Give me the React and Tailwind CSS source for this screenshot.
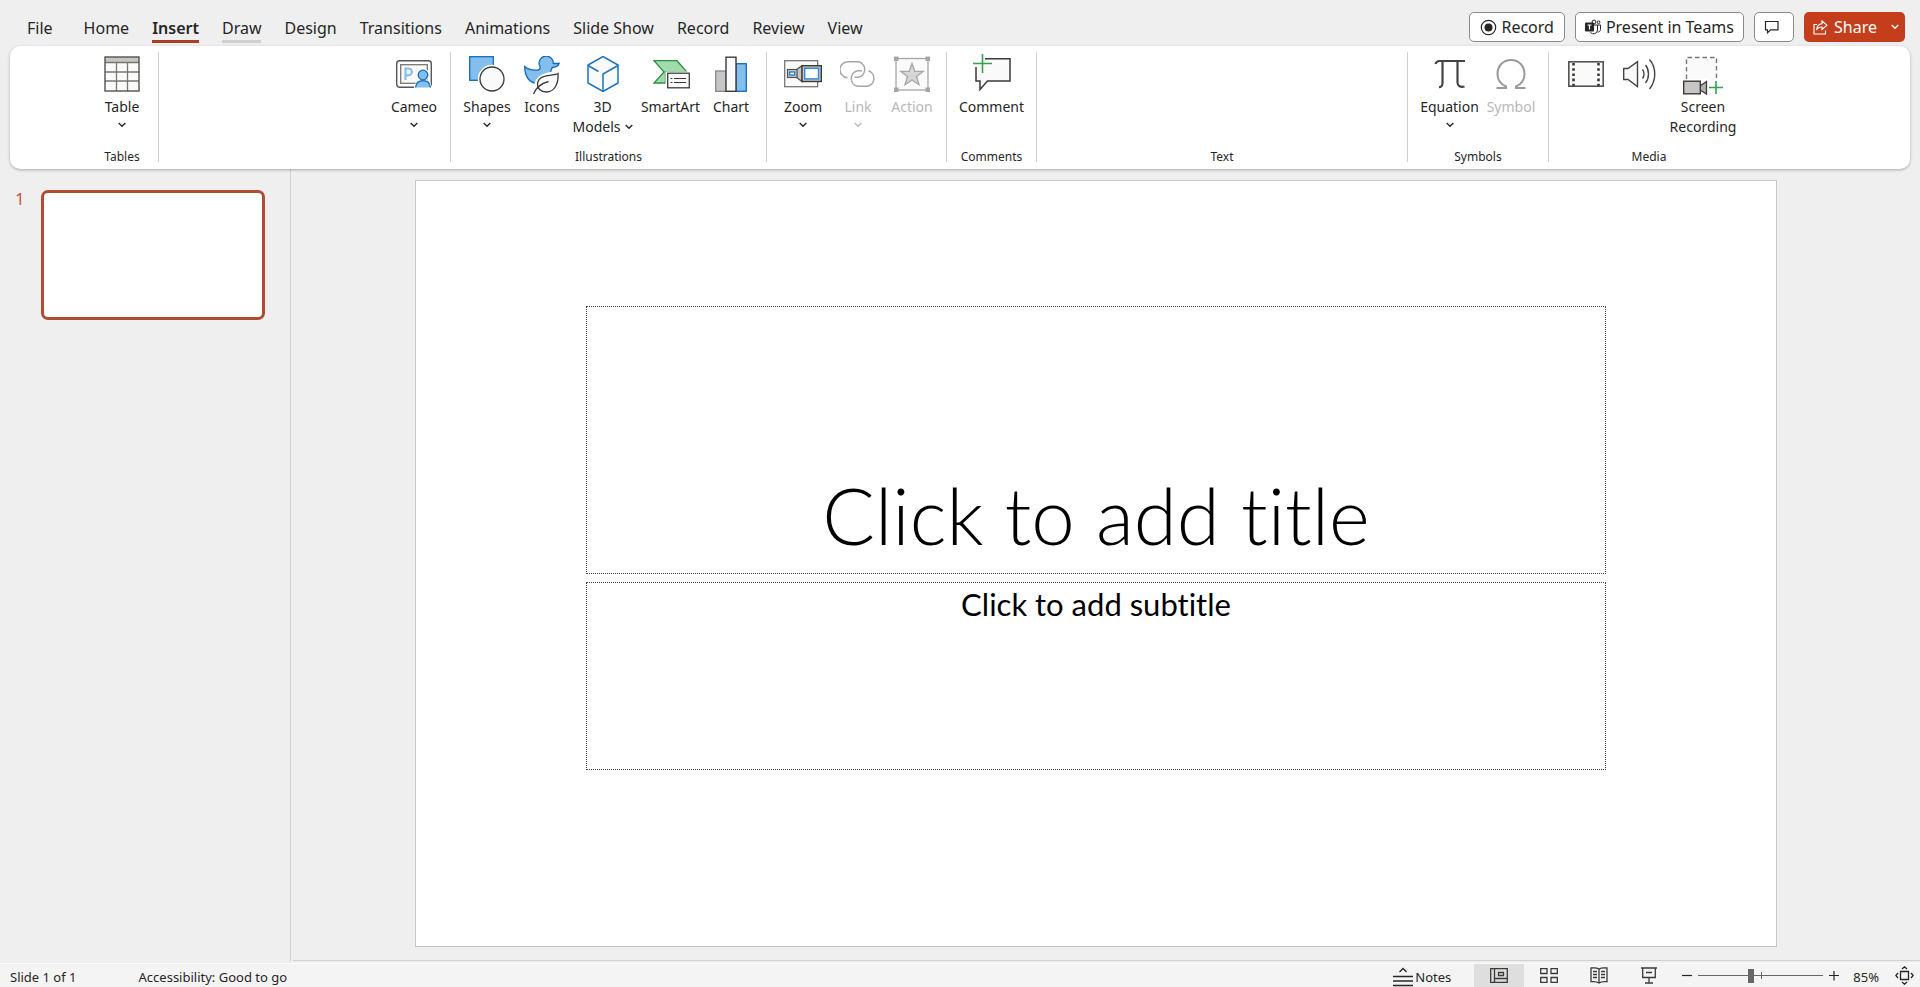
import React from "react";

const TableIcon = () => (
    <svg width="36" height="36" viewBox="0 0 36 36" fill="none">
        <rect x="1" y="1" width="34" height="34" fill="#fafafa" />
        <rect x="1" y="1" width="34" height="5" fill="#c8c6c4" />
        <path d="M1 6.500H35M12.500 6V35M23.500 6V35M1 16H35M1 25H35" stroke="#797774" strokeWidth="1.300" />
        <rect x="1" y="1" width="34" height="34" stroke="#55534f" strokeWidth="1.400" />
    </svg>
);

const CameoIcon = () => (
    <svg width="36" height="36" viewBox="0 0 36 36" fill="none">
        <rect x="0.700" y="4.700" width="34.600" height="26.600" rx="3" fill="#fff" stroke="#55555a" strokeWidth="1.400" />
        <rect x="4.700" y="8.700" width="26.600" height="18.600" fill="#fafafa" stroke="#797774" strokeWidth="1.300" />
        <path d="M9.500 24V12.500H12.500a3.300 3.300 0 0 1 0 6.800H9.500" stroke="#83beec" strokeWidth="2.200" />
        <path d="M18 33c0-5 3-8 5-9a6.500 6.500 0 1 1 8 0c2.500 1 5 4 5 9z" fill="#fff" />
        <circle cx="27" cy="19" r="4.800" fill="#83beec" stroke="#0f6cbd" strokeWidth="1.300" />
        <path d="M19.600 31.500c.4-4.500 3.400-6.900 7.400-6.900s7 2.400 7.400 6.900" fill="#83beec" stroke="#0f6cbd" strokeWidth="1.300" />
    </svg>
);

const ShapesIcon = () => (
    <svg width="36" height="36" viewBox="0 0 36 36" fill="none">
        <rect x="0.700" y="0.700" width="23.600" height="23.600" fill="#83beec" stroke="#0f6cbd" strokeWidth="1.300" />
        <circle cx="23" cy="23" r="14.200" fill="#fff" />
        <circle cx="23" cy="23" r="12" fill="#fafafa" stroke="#3b3a39" strokeWidth="1.300" />
    </svg>
);

const IconsIcon = () => (
    <svg width="36" height="38" viewBox="0 0 36 38" fill="none">
        <path d="M0.700 10.500c3.500 3.500 8.500 3.800 13 3.500 2-.2 2.800-1.500 2.200-3.500a7 7 0 0 1 12.600-6.700c.5 1 .7 2.200.7 3.500 2 .4 4 .2 6 0-1 2.700-3.700 4.200-7 4.200-.8 2.500-1.700 3.500-1.700 6 0 6.500-5.500 10-12.500 10C5.500 27.500.7 20.500.7 10.500z" fill="#83beec" stroke="#0f6cbd" strokeWidth="1.300" />
        <path d="M9.500 38c0-6 .5-12 3.500-15.500 4-5.500 12-6.500 23-7.500 1.500 13-3 24-14 23z" fill="#fff" />
        <path d="M34 17.500c.8 10-3.500 18.500-11.500 18.500-6 0-9.500-4-9-8.500.7-7.500 9.500-8 14.500-8.500 2.500-.3 4.500-.5 6-1.500z" fill="#fafafa" stroke="#3b3a39" strokeWidth="1.300" />
        <path d="M9.500 38c2-5 6-10 15-12.500" stroke="#3b3a39" strokeWidth="1.300" />
    </svg>
);

const CubeIcon = () => (
    <svg width="36" height="36" viewBox="0 0 36 36" fill="none">
        <path d="M18 0.500L33 9V27L18 35.500L3 27V9z" fill="#fafafa" stroke="#1e74bd" strokeWidth="1.500" />
        <path d="M3 9.500L13.500 15.500M33 9.500L18 18V35" stroke="#1e74bd" strokeWidth="1.500" />
    </svg>
);

const SmartArtIcon = () => (
    <svg width="38" height="36" viewBox="0 0 38 36" fill="none">
        <path d="M2 4.700H25L35 16H13.500V27H2L12 16z" fill="#a1dba9" stroke="#2f8f48" strokeWidth="1.300" />
        <rect x="13.500" y="15.500" width="24" height="17" fill="#fff" />
        <rect x="15.700" y="17.200" width="21.600" height="14.600" fill="#fafafa" stroke="#3b3a39" strokeWidth="1.300" />
        <path d="M18.500 22.500h2M22 22.500h12M18.500 26.500h2M22 26.500h12" stroke="#3b3a39" strokeWidth="1.200" />
    </svg>
);

const ChartIcon = () => (
    <svg width="34" height="36" viewBox="0 0 34 36" fill="none">
        <rect x="1.700" y="15" width="10.600" height="20.300" fill="#c8c6c4" stroke="#8a8886" strokeWidth="1.300" />
        <rect x="22" y="7.700" width="10.300" height="27.600" fill="#83beec" stroke="#0f6cbd" strokeWidth="1.300" />
        <rect x="12" y="1.200" width="10" height="34.100" fill="#fafafa" stroke="#3b3a39" strokeWidth="1.400" />
    </svg>
);

const ZoomIcon = () => (
    <svg width="38" height="36" viewBox="0 0 38 36" fill="none">
        <rect x="0.700" y="4.700" width="33" height="26" fill="#fafafa" stroke="#797774" strokeWidth="1.300" />
        <path d="M12.500 13.500L18 9.700V25.500L12.500 21.500z" fill="#c8c6c4" stroke="#55534f" strokeWidth="1.200" />
        <rect x="3.500" y="13.500" width="9.500" height="8" fill="#c8c6c4" stroke="#55534f" strokeWidth="1.200" />
        <rect x="5.700" y="16" width="5" height="3" fill="#fff" stroke="#0f78d4" strokeWidth="1.200" />
        <rect x="18" y="9.700" width="19.300" height="15.800" fill="#c8c6c4" stroke="#3b3a39" strokeWidth="1.400" />
        <rect x="20.700" y="12.300" width="13.800" height="10.600" fill="#fff" stroke="#2b88d8" strokeWidth="1.400" />
    </svg>
);

const LinkIcon = () => (
    <svg width="36" height="36" viewBox="0 0 36 36" fill="none" stroke="#a6a6a6" strokeWidth="1.500">
        <path d="M7.500 21.800A8 8 0 0 1 8.500 5.700H18.500a8 8 0 0 1 0 15.600H14.500" />
        <path d="M28.500 14.800a8 8 0 0 1-1.500 15.500H17.500a8 8 0 0 1 0-15.600H22" />
    </svg>
);

const ActionIcon = () => (
    <svg width="36" height="36" viewBox="0 0 36 36" fill="none">
        <rect x="2" y="2.500" width="32" height="31.500" fill="#fafafa" stroke="#a6a6a6" strokeWidth="1.300" />
        <path d="M0 0.500h4.500V5H0zM31.500 0.500H36V5h-4.500zM0 31.500h4.500V36H0zM31.500 31.500H36V36h-4.500z" fill="#a6a6a6" />
        <path d="M18 7.500l2.800 7.800h8.400l-6.700 5.100 2.500 8.400L18 24l-7 4.800 2.500-8.400-6.700-5.100h8.400z" fill="#d6d6d6" stroke="#a6a6a6" strokeWidth="1.300" />
    </svg>
);

const CommentIcon = () => (
    <svg width="38" height="36" viewBox="0 0 38 36" fill="none" className="overflow-visible">
        <path d="M3 10L12 2.700H37V25H14.500L7 33.500V25H3z" fill="#fafafa" />
        <path d="M12 2.700H37V25H14.500L7 33.500V25H3V11" stroke="#3b3a39" strokeWidth="1.500" />
        <path d="M9.500-1V17M0 7.500H19" stroke="#fff" strokeWidth="4" />
        <path d="M9.500-2V17M0 7.500H19" stroke="#31a14a" strokeWidth="1.600" />
    </svg>
);

const PiIcon = () => (
    <svg width="32" height="36" viewBox="0 0 32 36" fill="none" stroke="#454442" strokeWidth="2.200">
        <path d="M1.500 8C2 6 3 5 5.500 5H31" />
        <path d="M8.500 5.500V27c0 3-1.500 4.300-3.500 4" />
        <path d="M23.500 5.500V26.500c0 3.500 3 5 7 4" />
    </svg>
);

const OmegaIcon = () => (
    <svg width="32" height="36" viewBox="0 0 32 36" fill="none">
        <path d="M1.500 32H11v-1.500C5.500 28 2.500 23.500 2.500 18 2.500 10 8 4 16 4s13.500 6 13.500 14c0 5.500-3 10-8.500 12.500V32h9.500" stroke="#9a9a9a" strokeWidth="2" />
    </svg>
);

const VideoIcon = () => (
    <svg width="36" height="36" viewBox="0 0 36 36" fill="none">
        <rect x="0.800" y="5.800" width="34.400" height="24.400" fill="#fafafa" stroke="#55534f" strokeWidth="1.600" />
        <path d="M5.500 7V30M30.500 7V30" stroke="#3b3a39" strokeWidth="2.600" strokeDasharray="2.600 2.600" />
    </svg>
);

const AudioIcon = () => (
    <svg width="36" height="36" viewBox="0 0 36 36" fill="none" stroke="#454442" strokeWidth="1.400">
        <path d="M1.700 12.500H6L15.500 5.700V30.500L6 23.500H1.700z" fill="#fafafa" />
        <path d="M20.500 13.500c2 2.500 2 6.500 0 9M23.500 9c4 5 4 13 0 18M27.500 3.500c7 8 7 21 0 29.500" />
    </svg>
);

const ScreenRecordingIcon = () => (
    <svg width="40" height="40" viewBox="0 0 40 40" fill="none">
        <rect x="3.500" y="1" width="30" height="24" fill="#fafafa" />
        <path d="M3.500 23V1.500H33.500V23" stroke="#797774" strokeWidth="1.400" strokeDasharray="4.500 3" />
        <rect x="0" y="23" width="25" height="17" fill="#fff" />
        <path d="M17 30l6.500-4.500V38L17 34z" fill="#b3b0ad" stroke="#3b3a39" strokeWidth="1.300" />
        <rect x="0.700" y="25.200" width="16.600" height="12.600" fill="#c8c6c4" stroke="#3b3a39" strokeWidth="1.400" />
        <path d="M33 25V38M26 31.500H40" stroke="#31a14a" strokeWidth="1.600" />
    </svg>
);

const Chevron = () => (
    <svg width="8" height="6" viewBox="0 0 8 6" fill="none" stroke="currentColor" strokeWidth="1.400">
        <path d="M0.700 1L4 4.300L7.300 1" />
    </svg>
);

const tabs = ["Home", "Insert", "Draw", "Design", "Transitions", "Animations", "Slide Show", "Record", "Review", "View"];

const groups = [
    { name: "Tables", box: "w-[149px] pl-[76px]", row: "", tools: [{ label: "Table", icon: TableIcon, width: "w-[72px]", menu: true }] },
    { name: "", box: "w-[292px]", row: "justify-end", tools: [{ label: "Cameo", icon: CameoIcon, width: "w-[72px]", menu: true }] },
    {
        name: "Illustrations",
        box: "w-[316px]",
        row: "pl-2",
        tools: [
            { label: "Shapes", icon: ShapesIcon, width: "w-[56px]", menu: true },
            { label: "Icons", icon: IconsIcon, width: "w-[54px]" },
            { label: "3D", second: "Models", icon: CubeIcon, width: "w-[67px]", menu: true },
            { label: "SmartArt", icon: SmartArtIcon, width: "w-[69px]" },
            { label: "Chart", icon: ChartIcon, width: "w-[52px]" }
        ]
    },
    {
        name: "",
        box: "w-[180px]",
        row: "pl-2",
        tools: [
            { label: "Zoom", icon: ZoomIcon, width: "w-[56px]", menu: true },
            { label: "Link", icon: LinkIcon, width: "w-[54px]", menu: true, disabled: true },
            { label: "Action", icon: ActionIcon, width: "w-[54px]", disabled: true }
        ]
    },
    { name: "Comments", box: "w-[90px]", row: "justify-center", tools: [{ label: "Comment", icon: CommentIcon, width: "w-[72px]" }] },
    { name: "Text", box: "w-[371px]", row: "", tools: [] },
    {
        name: "Symbols",
        box: "w-[141px]",
        row: "pl-2",
        tools: [
            { label: "Equation", icon: PiIcon, width: "w-[67px]", menu: true },
            { label: "Symbol", icon: OmegaIcon, width: "w-[56px]", disabled: true }
        ]
    },
    {
        name: "Media",
        box: "w-[200px]",
        row: "pl-[10px]",
        last: true,
        tools: [
            { title: "Video", icon: VideoIcon, width: "w-[54px]" },
            { title: "Audio", icon: AudioIcon, width: "w-[54px]" },
            { label: "Screen", second: "Recording", icon: ScreenRecordingIcon, width: "w-[72px]" }
        ]
    }
];

const Tool = ({ tool }) => {
    const Icon = tool.icon;
    return (
        <button
            disabled={tool.disabled}
            aria-label={tool.title}
            className={`${tool.width} flex flex-col items-center text-[14px] leading-5 text-[#262626] disabled:text-[#b8b8b8] shrink-0`}
        >
            <span className="h-[41px] flex items-start justify-center">
                <Icon />
            </span>
            <span>{tool.label}</span>
            {tool.second ? (
                <span className="flex items-center gap-1 whitespace-nowrap">
                    {tool.second}
                    {tool.menu && <Chevron />}
                </span>
            ) : (
                tool.menu && <span className="h-4 flex items-center"><Chevron /></span>
            )}
        </button>
    );
};

const Group = ({ name, box, row, tools, last }) => (
    <section className={`${box} flex flex-col justify-between shrink-0 ${last ? "" : "border-r border-[#d0d0d0]"}`}>
        <div className={`flex pt-1 ${row}`}>
            {tools.map((tool) => <Tool key={tool.title || tool.label} tool={tool} />)}
        </div>
        <h2 className="text-[12px] leading-[10px] text-[#262626] text-center">{name}</h2>
    </section>
);

const Header = () => (
    <header className="h-[46px] flex justify-between pl-[27px] pr-[15px] text-[16px] text-[#262626]">
        <nav className="flex items-start gap-[23px] pt-4 leading-6">
            <button className="mr-2">File</button>
            {tabs.map((tab) => (
                <button
                    key={tab}
                    className={`border-b-3 whitespace-nowrap ${tab === "Insert" ? "border-[#a93d25] font-semibold" : tab === "Draw" ? "border-[#cfcfcf]" : "border-transparent"}`}
                >
                    {tab}
                </button>
            ))}
        </nav>
        <div className="flex gap-[10px] pt-3">
            <button className="h-[30px] px-[10px] flex items-center gap-1 rounded-[5px] border border-[#8a8a8a] bg-white">
                <svg width="17" height="17" viewBox="0 0 17 17" fill="none">
                    <circle cx="8.500" cy="8.500" r="7.200" stroke="#262626" strokeWidth="1.200" />
                    <circle cx="8.500" cy="8.500" r="4" fill="#262626" />
                </svg>
                Record
            </button>
            <button className="h-[30px] px-[9px] flex items-center gap-[5px] rounded-[5px] border border-[#8a8a8a] bg-white">
                <svg width="16" height="16" viewBox="0 0 16 16" fill="none">
                    <circle cx="9" cy="3" r="1.900" stroke="#262626" />
                    <circle cx="13.500" cy="3.200" r="1.400" stroke="#262626" />
                    <path d="M8 6H12.500V11a4 4 0 0 1-7 2.500M12.500 6H15.500V10.500a2.500 2.500 0 0 1-3 2.500" stroke="#262626" />
                    <rect x="0" y="3.500" width="9" height="9" rx="1" fill="#262626" />
                    <path d="M2.500 6H6.500M4.500 6V10.500" stroke="#fff" strokeWidth="1.200" />
                </svg>
                Present in Teams
            </button>
            <button aria-label="Comments" className="h-[30px] w-10 pr-1 flex items-center justify-center rounded-[5px] border border-[#8a8a8a] bg-white">
                <svg width="16" height="14" viewBox="0 0 16 14" fill="none">
                    <path d="M1.500 1.500H14V9.800H6.500L3.500 12.800V9.800H1.500z" stroke="#262626" strokeWidth="1.200" />
                </svg>
            </button>
            <button className="h-[30px] w-[101px] pl-[9px] pr-[6px] flex items-center justify-between rounded-[5px] bg-[#c43e1c] text-white">
                <span className="flex items-center gap-[6px]">
                    <svg width="15" height="15" viewBox="0 0 15 15" fill="none" stroke="#fff" strokeWidth="1.100">
                        <path d="M4 4.500H1V14H12.500V10.500" />
                        <path d="M9 1L14 5.200L9 9.500V7C6 7 4.500 8 3.500 10 3.700 6.500 5.500 4 9 3.700z" />
                    </svg>
                    Share
                </span>
                <Chevron />
            </button>
        </div>
    </header>
);

const Ribbon = () => (
    <div className="mx-[10px] h-[123px] pt-[6px] pb-[7px] flex rounded-[10px] bg-white shadow-[0_1px_3px_rgba(0,0,0,0.3)] relative z-10">
        {groups.map((group, i) => <Group key={i} {...group} />)}
    </div>
);

const StatusBar = () => (
    <footer className="h-6 flex justify-between border-t border-white bg-[#f4f4f4] text-[13px] leading-5 text-[#262626]">
        <div className="flex items-center gap-[62px] pl-[10px] pt-[3px]">
            <span>Slide 1 of 1</span>
            <button>Accessibility: Good to go</button>
        </div>
        <div className="flex items-center pr-[6px]">
            <button className="flex items-center gap-[2px] mr-[23px] pt-[2px]">
                <svg width="20" height="20" viewBox="0 0 20 20" fill="none" stroke="#262626" strokeWidth="1.300">
                    <path d="M6.500 5L10 1.500L13.500 5M0 9.500H20M0 14H20M0 18.500H20" />
                </svg>
                Notes
            </button>
            <button aria-label="Normal view" className="w-[50px] h-full flex items-center justify-center bg-[#dedede]">
                <svg width="18" height="15" viewBox="0 0 18 15" fill="none" stroke="#3b3a39" strokeWidth="1.300">
                    <path d="M0.700 0.700H17.300V14.300H0.700zM4.500 0.700V14.300M4.500 10.500H17.300M8.500 4.500H13.500V7.500H8.500z" />
                </svg>
            </button>
            <button aria-label="Slide sorter" className="w-[50px] h-full flex items-center justify-center">
                <svg width="18" height="15" viewBox="0 0 18 15" fill="none" stroke="#3b3a39" strokeWidth="1.300">
                    <path d="M0.700 0.700H7V5.500H0.700zM11 0.700H17.300V5.500H11zM0.700 9.500H7V14.300H0.700zM11 9.500H17.300V14.300H11z" />
                </svg>
            </button>
            <button aria-label="Reading view" className="w-[50px] h-full flex items-center justify-center">
                <svg width="18" height="17" viewBox="0 0 18 17" fill="none" stroke="#3b3a39" strokeWidth="1.300">
                    <path d="M9 2C7 .7 3.500 .7 1 1V14.700C3.500 14.400 7 14.500 9 16C11 14.500 14.500 14.400 17 14.700V1C14.500 .7 11 .7 9 2zM9 2V16" />
                    <path d="M3 4.500H7M3 7.500H7M3 10.500H7M11 4.500H15M11 7.500H15M11 10.500H15" />
                </svg>
            </button>
            <button aria-label="Slide show" className="w-[50px] h-full flex items-center justify-center">
                <svg width="16" height="17" viewBox="0 0 16 17" fill="none" stroke="#3b3a39" strokeWidth="1.300">
                    <path d="M0 1H16M1.700 1V10.500H14.300V1M5 5.500H11M8 10.500V16M4 16H12" />
                </svg>
            </button>
            <button aria-label="Zoom out" className="ml-2 mr-[6px]">
                <svg width="10" height="10" viewBox="0 0 10 10" stroke="#262626" strokeWidth="1.200"><path d="M0 4.500H10" /></svg>
            </button>
            <div className="relative flex items-center">
                <input
                    type="range"
                    aria-label="Zoom"
                    min="0"
                    max="100"
                    defaultValue="42"
                    className="w-[125px] h-[14px] appearance-none bg-[linear-gradient(#666,#666)] bg-[length:100%_1px] bg-center bg-no-repeat [&::-webkit-slider-thumb]:appearance-none [&::-webkit-slider-thumb]:w-[6px] [&::-webkit-slider-thumb]:h-[14px] [&::-webkit-slider-thumb]:bg-[#666]"
                />
                <span className="absolute left-1/2 h-[7px] w-px bg-[#666]"></span>
            </div>
            <button aria-label="Zoom in" className="ml-[6px] mr-[14px]">
                <svg width="10" height="10" viewBox="0 0 10 10" stroke="#262626" strokeWidth="1.200"><path d="M0 4.500H10M5 0V9.500" /></svg>
            </button>
            <button className="mr-4 pt-[2px]">85%</button>
            <button aria-label="Fit slide to window">
                <svg width="19" height="19" viewBox="0 0 19 19" fill="none" stroke="#262626" strokeWidth="1.300">
                    <path d="M5.500 5.500H13.500V13.500H5.500zM7 3L9.500 0.800L12 3M7 16L9.500 18.200L12 16M3 7L0.800 9.500L3 12M16 7L18.200 9.500L16 12" />
                </svg>
            </button>
        </div>
    </footer>
);

const App = () => (
    <div className="min-h-screen flex flex-col bg-[#efefef] font-['Noto_Sans','Open_Sans',sans-serif]">
        <Header />
        <Ribbon />
        <main className="flex-1 flex">
            <aside className="w-[291px] shrink-0 mb-[2px] pt-[21px] pl-[15px] border-r border-[#d0d0d0] flex items-start">
                <span className="w-[26px] text-[17px] leading-[18px] text-[#c8553a]">1</span>
                <button aria-label="Slide 1" className="w-[224px] h-[130px] rounded-[7px] border-3 border-[#b04b34] bg-white"></button>
            </aside>
            <div className="flex-1 ml-[2px] mb-[2px] pt-[11px] pl-[122px] pr-[143px] border-b border-[#d0d0d0]">
                <article className="aspect-[1362/767] pt-[125px] px-[170px] flex flex-col gap-2 border border-[#c6c6c6] bg-white text-black text-center font-['Lato','Open_Sans',sans-serif] [font-variant-ligatures:none]">
                    <h1 className="h-[268px] pb-[14px] flex items-end justify-center border border-dotted border-[#444] text-[78px] leading-[88px] font-light">
                        Click to add title
                    </h1>
                    <p className="h-[188px] pt-[3px] border border-dotted border-[#444] text-[31px] leading-9">Click to add subtitle</p>
                </article>
            </div>
        </main>
        <StatusBar />
    </div>
);

export default App;
